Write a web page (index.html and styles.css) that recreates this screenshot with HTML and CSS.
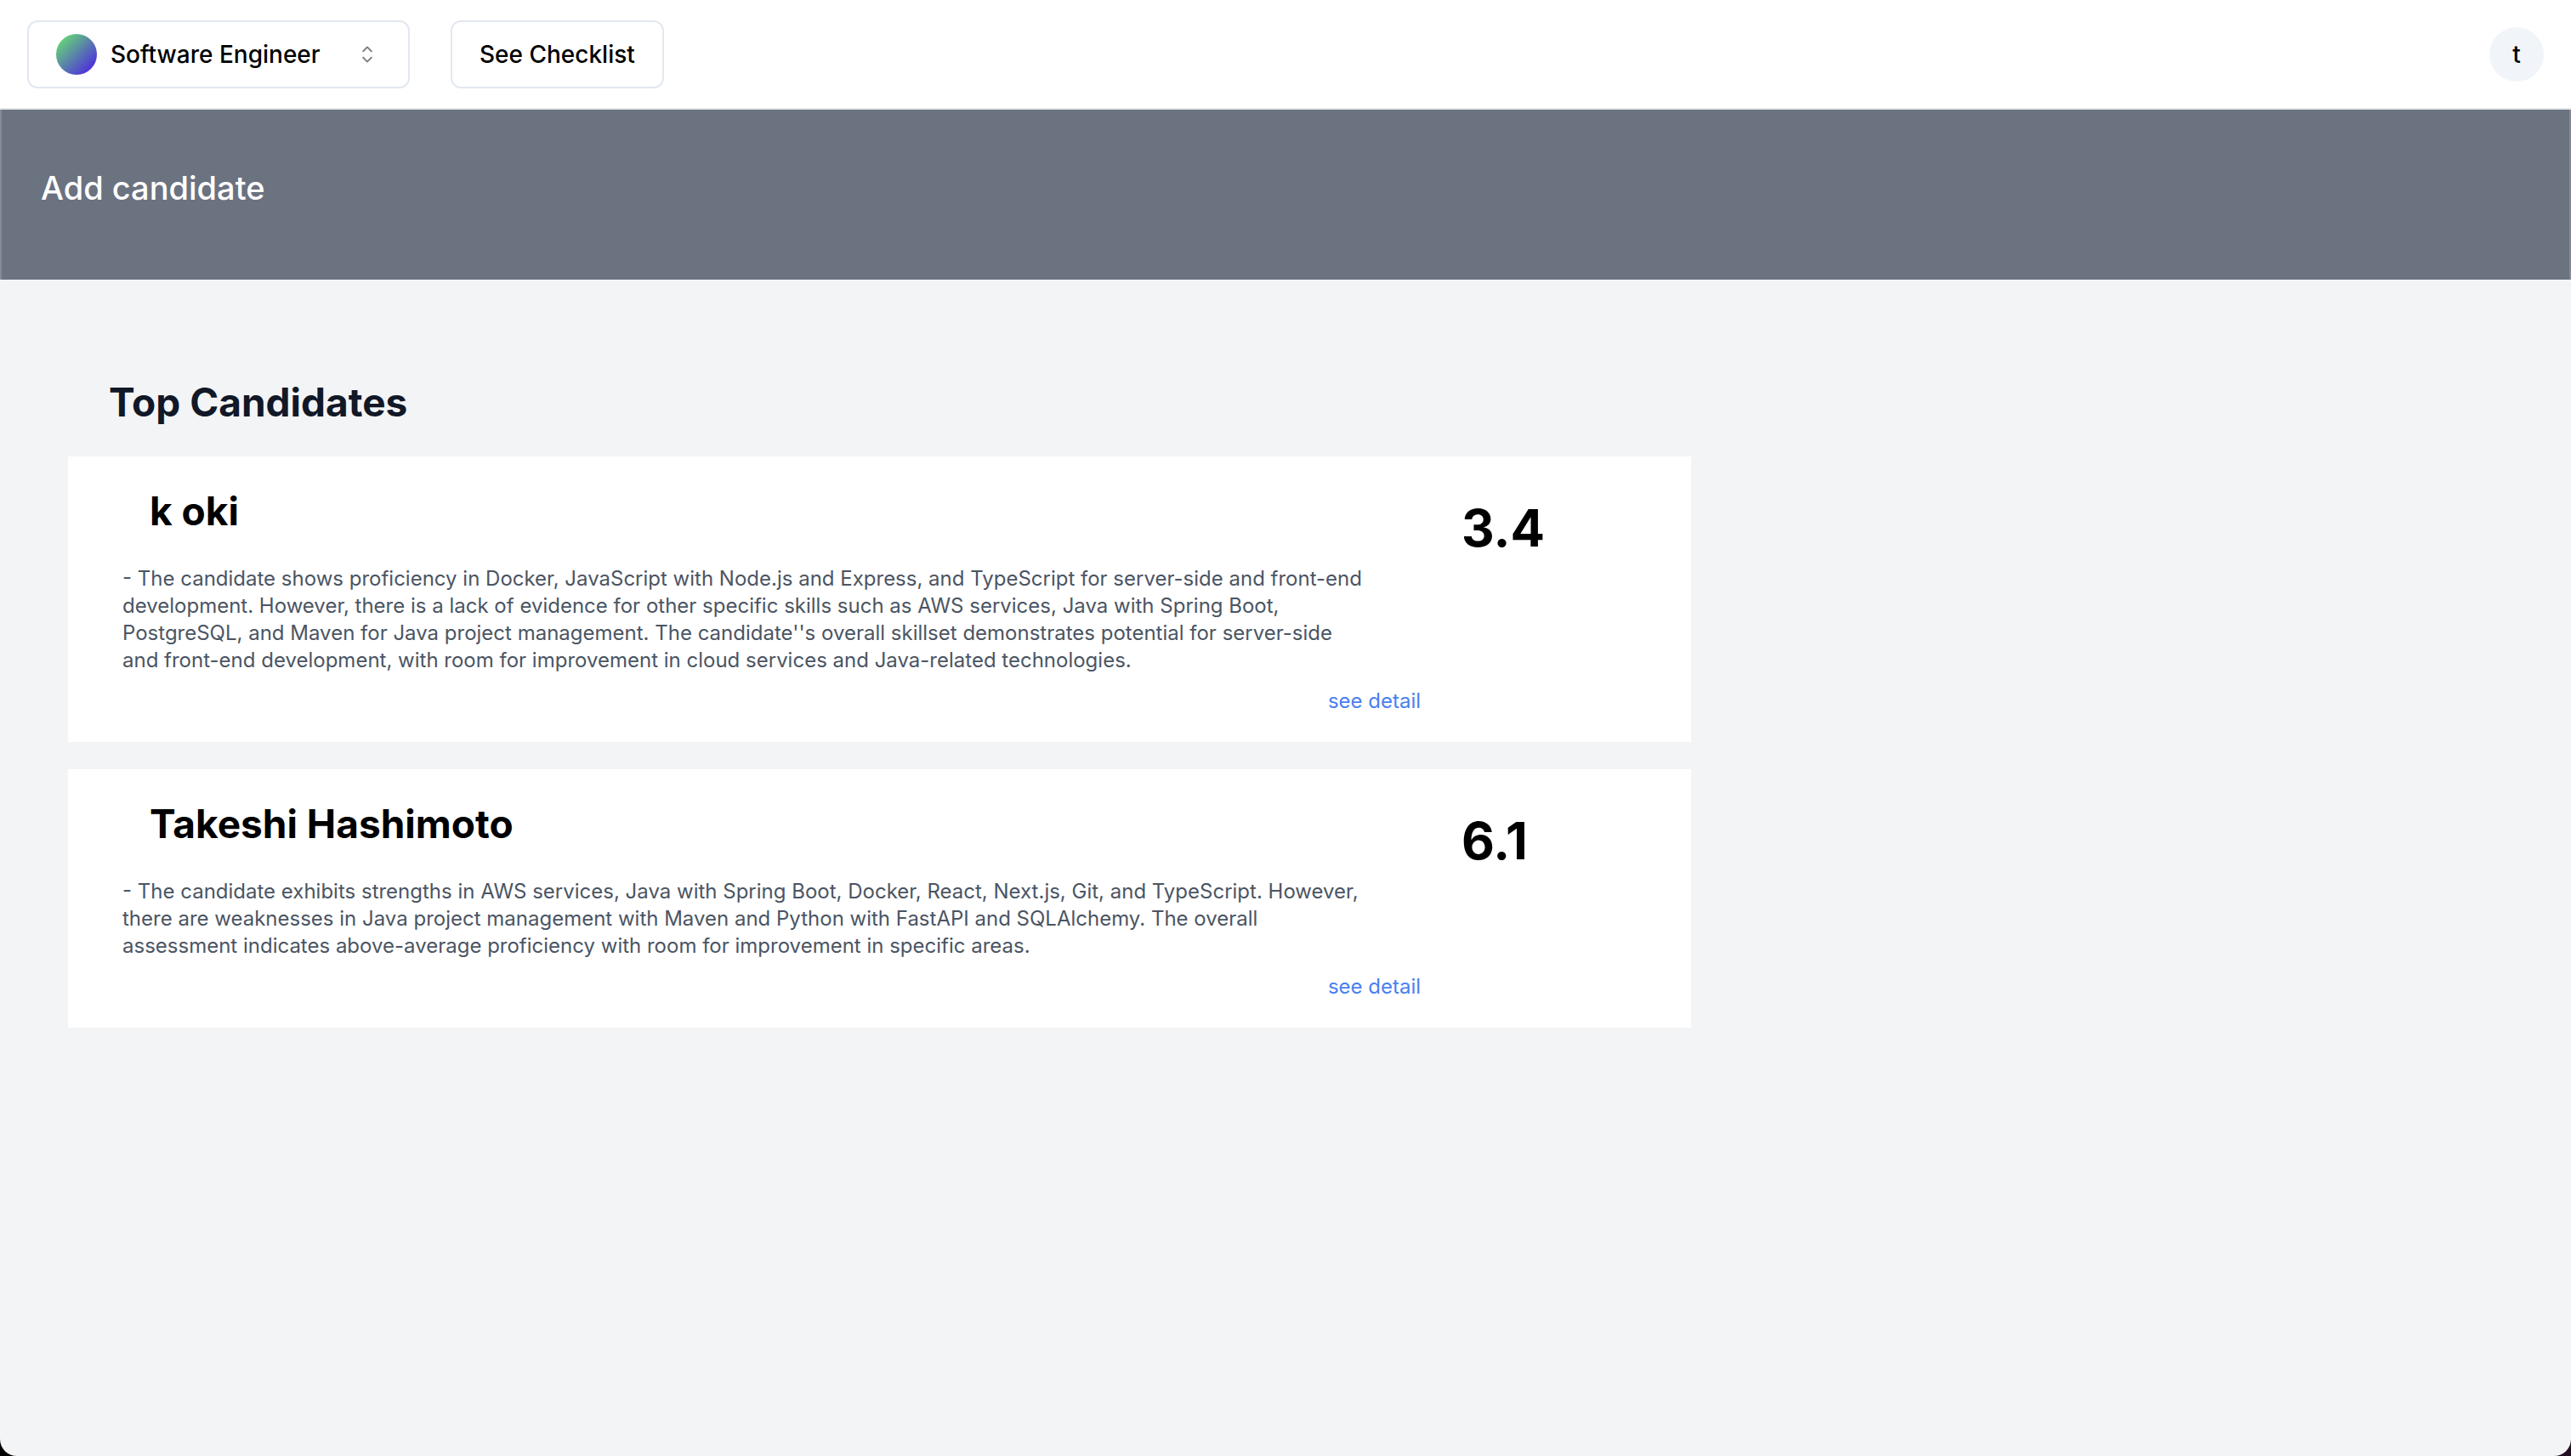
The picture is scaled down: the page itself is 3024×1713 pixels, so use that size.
FILE: index.html
```html
<!DOCTYPE html>
<html lang="en">
<head>
<meta charset="utf-8">
<meta name="viewport" content="width=device-width, initial-scale=1">
<title>Top Candidates</title>
<link rel="stylesheet" href="styles.css">
</head>
<body>
<header class="topbar">
  <button class="btn switcher" type="button" aria-haspopup="listbox">
    <span class="swatch"></span>
    <span>Software Engineer</span>
    <svg class="caret" viewBox="0 0 15 15" aria-hidden="true"><path fill="currentColor" fill-rule="evenodd" clip-rule="evenodd" d="M4.93179 5.43179C4.75605 5.60753 4.75605 5.89245 4.93179 6.06819C5.10753 6.24392 5.39245 6.24392 5.56819 6.06819L7.49999 4.13638L9.43179 6.06819C9.60753 6.24392 9.89245 6.24392 10.0682 6.06819C10.2439 5.89245 10.2439 5.60753 10.0682 5.43179L7.81819 3.18179C7.73379 3.0974 7.61933 3.04999 7.49999 3.04999C7.38064 3.04999 7.26618 3.0974 7.18179 3.18179L4.93179 5.43179ZM10.0682 9.56819C10.2439 9.39245 10.2439 9.10753 10.0682 8.93179C9.89245 8.75606 9.60753 8.75606 9.43179 8.93179L7.49999 10.8636L5.56819 8.93179C5.39245 8.75606 5.10753 8.75606 4.93179 8.93179C4.75605 9.10753 4.75605 9.39245 4.93179 9.56819L7.18179 11.8182C7.26618 11.9026 7.38064 11.95 7.49999 11.95C7.61933 11.95 7.73379 11.9026 7.81819 11.8182L10.0682 9.56819Z"/></svg>
  </button>
  <button class="btn" type="button">See Checklist</button>
  <button class="avatar" type="button">t</button>
</header>
<section class="banner">
  <h1 class="banner-title">Add candidate</h1>
</section>
<main class="content">
  <h2 class="section-title">Top Candidates</h2>
  <div class="candidates">
    <article class="card">
      <div class="card-main">
        <h3 class="name">k oki</h3>
        <p class="summary">- The candidate shows proficiency in Docker, JavaScript with Node.js and Express, and TypeScript for server-side and front-end development. However, there is a lack of evidence for other specific skills such as AWS services, Java with Spring Boot, PostgreSQL, and Maven for Java project management. The candidate''s overall skillset demonstrates potential for server-side and front-end development, with room for improvement in cloud services and Java-related technologies.</p>
        <a class="detail" href="#">see detail</a>
      </div>
      <p class="score">3.4</p>
    </article>
    <article class="card">
      <div class="card-main">
        <h3 class="name">Takeshi Hashimoto</h3>
        <p class="summary">- The candidate exhibits strengths in AWS services, Java with Spring Boot, Docker, React, Next.js, Git, and TypeScript. However, there are weaknesses in Java project management with Maven and Python with FastAPI and SQLAlchemy. The overall assessment indicates above-average proficiency with room for improvement in specific areas.</p>
        <a class="detail" href="#">see detail</a>
      </div>
      <p class="score">6.1</p>
    </article>
  </div>
</main>
</body>
</html>
```

FILE: styles.css
```css
* {
  box-sizing: border-box;
  margin: 0;
}

html {
  background: linear-gradient(90deg, #000, #220f22);
}

body {
  min-height: 100vh;
  overflow: hidden;
  border-radius: 0 0 20px 20px;
  background: #f3f4f6;
  color: #000;
  font-family: Inter, "Liberation Sans", sans-serif;
  font-size: 24px;
  line-height: 32px;
}

.topbar {
  display: flex;
  align-items: center;
  gap: 48px;
  height: 129px;
  padding: 0 32px;
  border-bottom: 2px solid #e5e7eb;
  background: #fff;
}

.btn {
  display: flex;
  align-items: center;
  height: 80px;
  padding: 0 32px;
  border: 2px solid #e2e8f0;
  border-radius: 12px;
  background: #fff;
  color: #000;
  font: 500 28px/40px Inter, "Liberation Sans", sans-serif;
  white-space: nowrap;
}

.switcher {
  gap: 16px;
  width: 450px;
}

.swatch {
  width: 48px;
  height: 48px;
  border-radius: 50%;
  background: linear-gradient(135deg, #68ee68, #4a12ee);
}

.caret {
  width: 32px;
  height: 32px;
  margin-left: auto;
  opacity: 0.5;
}

.avatar {
  width: 64px;
  height: 64px;
  margin-left: auto;
  padding: 0;
  border: 0;
  border-radius: 50%;
  background: #f1f5f9;
  color: #000;
  font: 500 28px/40px Inter, "Liberation Sans", sans-serif;
}

.banner {
  padding: 64px 46px 80px;
  border: solid #858a95;
  border-width: 0 2px;
  background: #6b7280;
}

.banner-title {
  color: #fff;
  font-size: 38px;
  font-weight: 500;
  line-height: 56px;
}

.content {
  padding: 112px 80px 80px;
}

.section-title {
  padding-left: 48px;
  color: #111827;
  font-size: 46px;
  line-height: 64px;
}

.candidates {
  display: grid;
  gap: 32px;
  width: calc(100% * 2 / 3);
  margin-top: 32px;
}

.card {
  display: grid;
  grid-template-columns: 5fr 1fr;
  padding: 32px 0;
  background: #fff;
}

.card-main {
  display: flex;
  flex-direction: column;
}

.name {
  padding-left: 96px;
  font-size: 46px;
  line-height: 64px;
}

.summary {
  margin-top: 32px;
  padding: 0 64px;
  color: #4b5563;
}

.detail {
  align-self: flex-end;
  margin-top: 16px;
  color: #4a80f0;
  text-decoration: none;
}

.score {
  margin-top: 16px;
  padding-left: 48px;
  font-size: 60px;
  font-weight: 700;
  line-height: 72px;
}
```
